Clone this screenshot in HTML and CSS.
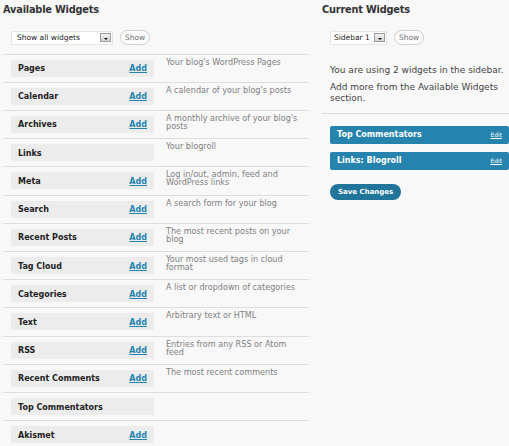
FILE: index.html
```html
<!DOCTYPE html>
<html>
<head>
<meta charset="utf-8">
<link rel="stylesheet" href="styles.css">
</head>
<body>
<div class="page">
  <section class="col left">
    <h2 class="title">Available Widgets</h2>
    <div class="controls">
      <span class="select wide">Show all widgets<span class="drop"><span class="tri"></span></span></span>
      <span class="btn">Show</span>
    </div>
    <ul class="widgets">
      <li><div class="wbox"><b>Pages</b><a href="#">Add</a></div><p class="desc">Your blog's WordPress Pages</p></li>
      <li><div class="wbox"><b>Calendar</b><a href="#">Add</a></div><p class="desc">A calendar of your blog's posts</p></li>
      <li><div class="wbox"><b>Archives</b><a href="#">Add</a></div><p class="desc">A monthly archive of your blog's posts</p></li>
      <li><div class="wbox"><b>Links</b></div><p class="desc">Your blogroll</p></li>
      <li><div class="wbox"><b>Meta</b><a href="#">Add</a></div><p class="desc">Log in/out, admin, feed and WordPress links</p></li>
      <li><div class="wbox"><b>Search</b><a href="#">Add</a></div><p class="desc">A search form for your blog</p></li>
      <li><div class="wbox"><b>Recent Posts</b><a href="#">Add</a></div><p class="desc">The most recent posts on your blog</p></li>
      <li><div class="wbox"><b>Tag Cloud</b><a href="#">Add</a></div><p class="desc">Your most used tags in cloud format</p></li>
      <li><div class="wbox"><b>Categories</b><a href="#">Add</a></div><p class="desc">A list or dropdown of categories</p></li>
      <li><div class="wbox"><b>Text</b><a href="#">Add</a></div><p class="desc">Arbitrary text or HTML</p></li>
      <li><div class="wbox"><b>RSS</b><a href="#">Add</a></div><p class="desc">Entries from any RSS or Atom feed</p></li>
      <li><div class="wbox"><b>Recent Comments</b><a href="#">Add</a></div><p class="desc">The most recent comments</p></li>
      <li><div class="wbox"><b>Top Commentators</b></div><p class="desc"></p></li>
      <li><div class="wbox"><b>Akismet</b><a href="#">Add</a></div><p class="desc"></p></li>
    </ul>
  </section>
  <section class="col right">
    <h2 class="title">Current Widgets</h2>
    <div class="controls">
      <span class="select narrow">Sidebar 1<span class="drop"><span class="tri"></span></span></span>
      <span class="btn">Show</span>
    </div>
    <div class="info">
      <p>You are using 2 widgets in the sidebar.</p>
      <p>Add more from the Available Widgets section.</p>
    </div>
    <ul class="current">
      <li class="bar"><b>Top Commentators</b><a href="#">Edit</a></li>
      <li class="bar"><b>Links: Blogroll</b><a href="#">Edit</a></li>
    </ul>
    <div class="save-row"><span class="save">Save Changes</span></div>
  </section>
</div>
</body>
</html>
```

FILE: styles.css
```css
html, body {
  margin: 0;
  padding: 0;
  background: #f8f8f8;
}
body {
  font-family: Verdana, "DejaVu Sans", sans-serif;
  color: #333;
  width: 509px;
  height: 446px;
  overflow: hidden;
}
.page {
  display: flex;
  align-items: flex-start;
}
.col.left {
  width: 306px;
  margin-left: 3px;
}
.col.right {
  flex: 1;
  margin-left: 13px;
}
.title {
  margin: 3px 0 0;
  font-size: 9.8px;
  line-height: 13px;
  font-weight: bold;
  color: #333;
  letter-spacing: -0.2px;
}
.controls {
  display: flex;
  align-items: center;
  gap: 7px;
  margin: 14px 0 0 8px;
  height: 15px;
}
.select {
  display: flex;
  align-items: center;
  justify-content: space-between;
  height: 14px;
  background: #fff;
  border: 1px solid #e6e6e6;
  box-sizing: border-box;
  padding: 0 1px 0 5px;
  font-size: 7.5px;
  color: #222;
}
.select.wide { width: 102px; }
.select.narrow { width: 57px; padding-left: 3px; }
.drop {
  width: 11px;
  height: 9px;
  background: linear-gradient(#f2f2f2, #d4d4d4);
  border: 1px solid #9a9a9a;
  box-sizing: border-box;
  display: flex;
  align-items: flex-end;
  justify-content: center;
  padding-bottom: 1px;
}
.tri {
  width: 0;
  height: 0;
  border-left: 2px solid transparent;
  border-right: 2px solid transparent;
  border-top: 2px solid #111;
}
.btn {
  height: 15px;
  box-sizing: border-box;
  padding: 0 4px;
  border: 1px solid #cfcfcf;
  border-radius: 8px;
  background: #fbfbfb;
  font-size: 7.5px;
  line-height: 13px;
  color: #777;
}
.widgets {
  list-style: none;
  margin: 8.5px 0 0;
  padding: 0;
  border-top: 1px solid #dedede;
}
.widgets li {
  display: flex;
  align-items: flex-start;
  height: 27.23px;
  border-bottom: 1px solid #dedede;
  padding-left: 8px;
}
.wbox {
  margin-top: 5px;
  width: 143px;
  height: 17px;
  background: #ececec;
  display: flex;
  align-items: center;
  justify-content: space-between;
  padding: 1px 7px 0 7px;
  box-sizing: border-box;
  font-size: 8px;
  flex: none;
}
.wbox b {
  color: #222;
  font-weight: bold;
}
.wbox a {
  color: #2583ad;
  font-weight: bold;
  text-decoration: underline;
}
.desc {
  margin: 3px 0 0 12px;
  font-size: 8.1px;
  line-height: 8px;
  color: #808080;
  width: 140px;
}
.info {
  margin: 19.5px 0 0 8px;
  font-size: 9px;
  line-height: 11px;
  color: #444;
}
.info p {
  margin: 0 0 6px;
}
.info p:last-child {
  width: 178px;
  margin-bottom: 0;
}
.current {
  list-style: none;
  margin: 9px 0 0;
  padding: 12px 0 0 8px;
  border-top: 1px solid #dedede;
}
.bar {
  display: flex;
  align-items: center;
  justify-content: space-between;
  height: 18px;
  margin-bottom: 8px;
  background: #2683ae;
  border-radius: 2px;
  padding: 0 7px 0 7px;
  font-size: 8px;
  color: #fff;
}
.bar a {
  color: #fff;
  font-size: 6px;
  text-decoration: underline;
}
.save-row {
  margin: 9px 0 0 8px;
}
.save {
  display: inline-block;
  height: 16px;
  line-height: 16px;
  padding: 0 8px;
  border-radius: 8px;
  background: #21759b;
  color: #fff;
  font-weight: bold;
  font-size: 7px;
}
```
